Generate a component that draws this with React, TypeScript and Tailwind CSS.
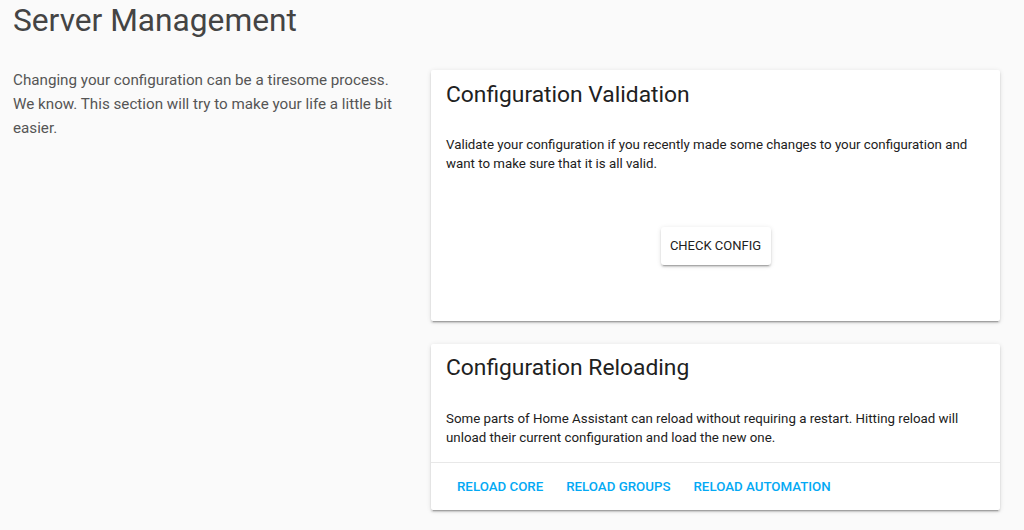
import React from "react";

export default function App() {
  return (
    <div
      className="w-full h-[530px] bg-[#fafafa] overflow-hidden"
      style={{ fontFamily: "Roboto, 'Liberation Sans', sans-serif" }}
    >
      <h1 className="px-[13px] pt-[1px] text-[31.7px] leading-[40px] font-normal text-[#444444]">
        Server Management
      </h1>
      <div className="flex pt-[29px]">
        <div className="w-[400px] pl-[13px] pr-[2px]">
          <p className="-mt-[2px] text-[15.2px] leading-[24px] text-[#555555]">
            Changing your configuration can be a tiresome process. We know. This
            section will try to make your life a little bit easier.
          </p>
        </div>
        <div className="ml-[31px] w-[569px] flex flex-col gap-[23px]">
          <div className="bg-white rounded-[2px] shadow-[0_2px_2px_0_rgba(0,0,0,0.14),0_1px_5px_0_rgba(0,0,0,0.12),0_3px_1px_-2px_rgba(0,0,0,0.2)] h-[251px] flex flex-col">
            <h2 className="px-[15px] pt-[9px] text-[22.8px] leading-[32px] font-normal text-[#212121]">
              Configuration Validation
            </h2>
            <p className="px-[15px] pt-[24px] text-[13.3px] leading-[19px] text-[#212121]">
              Validate your configuration if you recently made some changes to
              your configuration and want to make sure that it is all valid.
            </p>
            <div className="flex justify-center pt-[54px]">
              <button className="h-[38px] w-[110px] bg-white rounded-[3px] text-[13px] text-[#212121] uppercase shadow-[0_2px_2px_0_rgba(0,0,0,0.14),0_1px_5px_0_rgba(0,0,0,0.12),0_3px_1px_-2px_rgba(0,0,0,0.2)]">
                Check Config
              </button>
            </div>
          </div>
          <div className="bg-white rounded-[2px] shadow-[0_2px_2px_0_rgba(0,0,0,0.14),0_1px_5px_0_rgba(0,0,0,0.12),0_3px_1px_-2px_rgba(0,0,0,0.2)] flex flex-col">
            <h2 className="px-[15px] pt-[8px] text-[22.8px] leading-[32px] font-normal text-[#212121]">
              Configuration Reloading
            </h2>
            <p className="px-[15px] pt-[25px] pb-[15px] text-[13.3px] leading-[19px] text-[#212121]">
              Some parts of Home Assistant can reload without requiring a
              restart. Hitting reload will unload their current configuration
              and load the new one.
            </p>
            <div className="border-t border-[#e8e8e8] flex gap-[23px] pl-[26px] h-[48px] items-center">
              <button className="text-[13.3px] font-medium text-[#03a9f4] uppercase">
                Reload Core
              </button>
              <button className="text-[13.3px] font-medium text-[#03a9f4] uppercase">
                Reload Groups
              </button>
              <button className="text-[13.3px] font-medium text-[#03a9f4] uppercase">
                Reload Automation
              </button>
            </div>
          </div>
        </div>
      </div>
    </div>
  );
}
